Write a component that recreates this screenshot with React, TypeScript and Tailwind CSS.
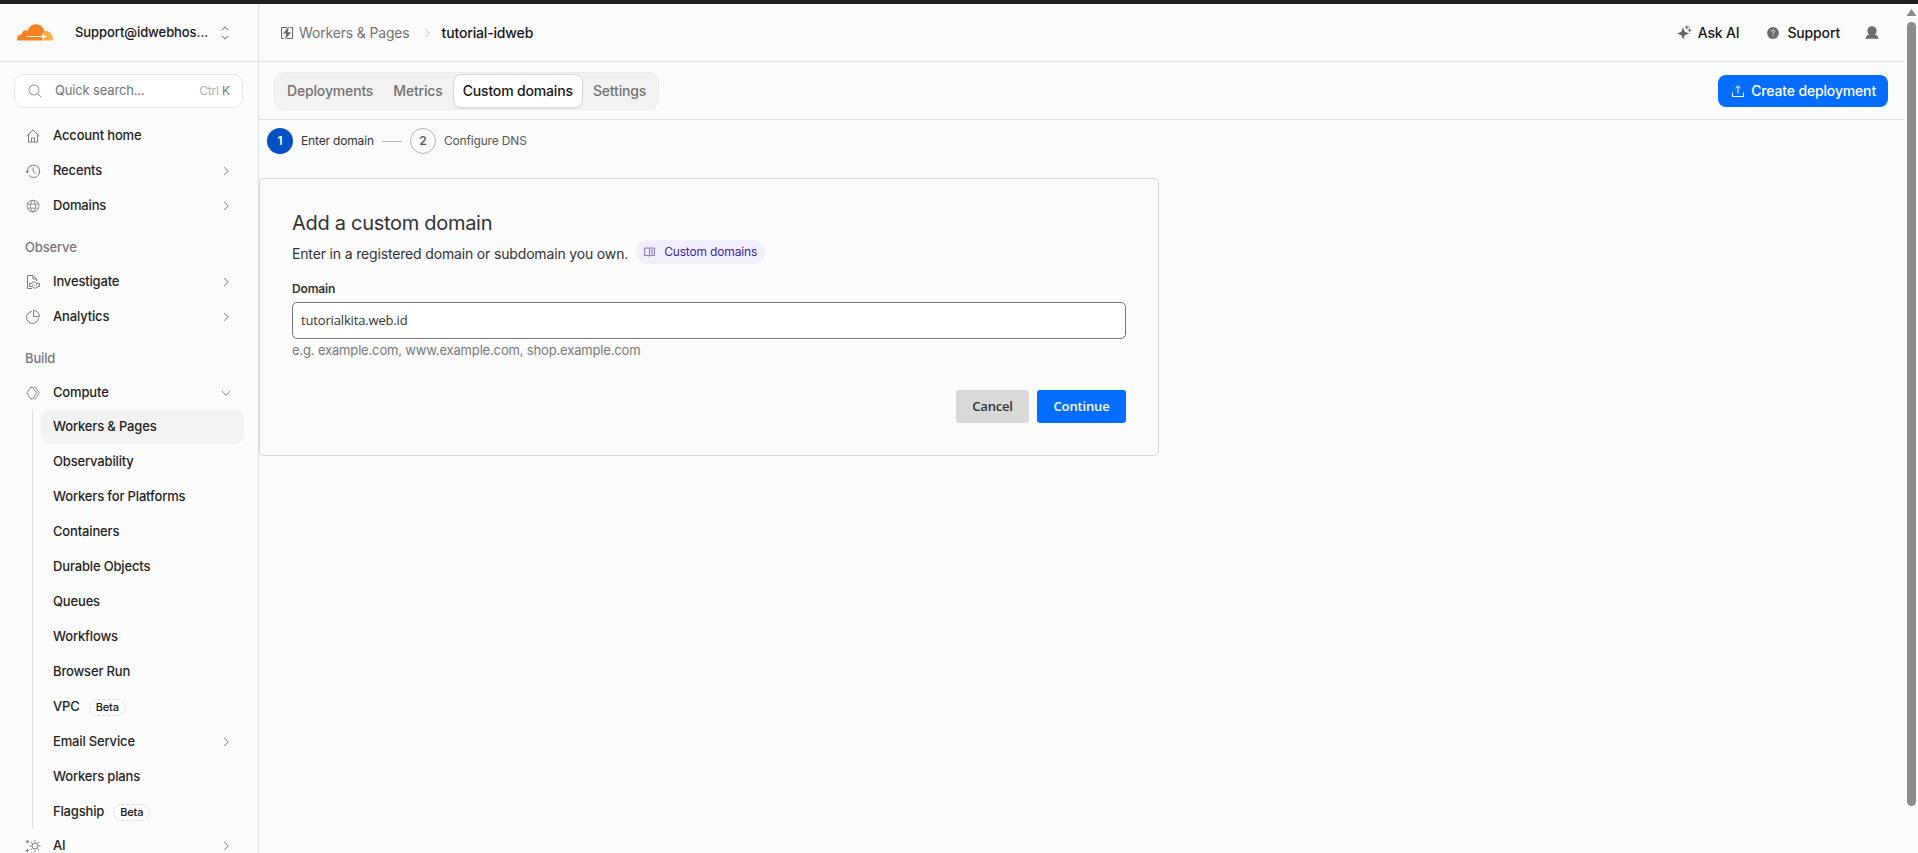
import React from 'react'
import {
  PiMagnifyingGlassLight,
  PiGlobeLight,
  PiCaretRight,
  PiCaretDown,
  PiCaretUpDown,
} from 'react-icons/pi'

type IconProps = { className?: string }

const CloudLogo: React.FC<IconProps> = ({ className }) => (
  <svg viewBox="0 0 36 17" className={className}>
    <path d="M24.500 16.600 26 12l1-4.700c.7-.3 1.400-.4 2.100-.4 3.900 0 6.900 3.900 6.900 8.800 0 .5-.1.900-.6.900z" fill="#fbad41" />
    <path d="M.6 16.600C.2 16.600 0 16.200 0 15.700c0-3 2-5.300 4.900-5.500-.2-2.200 1.500-4 3.500-3.900.9 0 1.700.3 2.300.8C11.900 3 15 .3 18.900.3c4.500 0 8.100 3.200 8.500 7.600l-.5 4.600-1.700 4.100z" fill="#f6821f" />
    <path d="M9.500 11.900h14l.5.6-.5.6h-14z" fill="#fff" />
    <path d="m26.200 8.200 1 3.200 3 1.100-3 1.100-1 3.200-1-3.200-3-1.100 3-1.100z" fill="#fff" />
  </svg>
)

const HomeIcon: React.FC<IconProps> = ({ className }) => (
  <svg viewBox="0 0 16 16" fill="none" stroke="currentColor" strokeWidth="1" className={className}>
    <path d="M1.500 8 8 2l6.500 6M3.500 6.500v7.500h9V6.500M6.500 14v-4h3v4" />
  </svg>
)

const HistoryIcon: React.FC<IconProps> = ({ className }) => (
  <svg viewBox="0 0 16 16" fill="none" stroke="currentColor" className={className}>
    <path d="M2.300 8.800A6.200 6.200 0 1 1 3.500 12" strokeWidth="1" />
    <path d="M.8 8.300h3L2.300 10z" fill="currentColor" strokeWidth=".6" />
    <path d="M8.200 4.400V8l2 2.600" strokeWidth="1" />
  </svg>
)

const InvestigateIcon: React.FC<IconProps> = ({ className }) => (
  <svg viewBox="0 0 16 16" fill="none" stroke="currentColor" strokeWidth="1" className={className}>
    <path d="M7 14.500H2.500v-13H8l3.500 3.500v2M8 1.500V5h3.500" />
    <path d="M4.500 9.500h2l1-1.500h3l1 1.500h3v3h-2l-1 1.500h-3l-1-1.500h-3zM7 11h1M9 11h1M11 11h1" />
  </svg>
)

const AnalyticsIcon: React.FC<IconProps> = ({ className }) => (
  <svg viewBox="0 0 16 16" fill="none" stroke="currentColor" strokeWidth="1" className={className}>
    <path d="M7 2.500A6 6 0 1 0 13.500 9M8.500 1.500v6h6a6 6 0 0 0-6-6z" />
  </svg>
)

const ComputeIcon: React.FC<IconProps> = ({ className }) => (
  <svg viewBox="0 0 16 16" fill="none" stroke="currentColor" strokeWidth=".9" className={className}>
    <path d="M6.500 2.500 5.700 2 1.800 8l3.900 6 .8-.5M6 2h1.500l4 6-4 6H6M9 2h1.300l3.900 6-3.900 6H9" />
  </svg>
)

const AiIcon: React.FC<IconProps> = ({ className }) => (
  <svg viewBox="0 0 16 16" fill="none" stroke="currentColor" strokeWidth="1" className={className}>
    <circle cx="10" cy="8" r="3" />
    <path d="M10 2v2M10 12v2M4.500 8h2M13.500 8h2M6 4l1.300 1.300M14 4l-1.300 1.300M6 12l1.300-1.300M14 12l-1.300-1.300" />
    <path d="M2.300 2v3.400M.6 3.700H4M2.300 11v3.400M.6 12.700H4" />
  </svg>
)

const WorkersIcon: React.FC<IconProps> = ({ className }) => (
  <svg viewBox="0 0 14 14" fill="none" stroke="currentColor" className={className}>
    <path d="M7 1.500H1.500v11h2.800M10 1.500h2.500v11H7" strokeWidth="1" />
    <path d="M9 .3 3 7.600h3.300L5 13.700l6-7.500H7.700z" fill="currentColor" stroke="none" />
  </svg>
)

const SparkleIcon: React.FC<IconProps> = ({ className }) => (
  <svg viewBox="0 0 16 16" fill="currentColor" className={className}>
    <path d="M6.500 2.500 8.300 7.200 13 9l-4.700 1.800-1.800 4.700-1.800-4.700L0 9l4.700-1.800z" />
    <path d="M10.500.5v4M8.500 2.500h4M13.500 3.800v3.400M11.800 5.500h3.400" stroke="currentColor" strokeWidth="1.100" />
  </svg>
)

const HelpIcon: React.FC<IconProps> = ({ className }) => (
  <svg viewBox="0 0 12 12" className={className}>
    <circle cx="6" cy="6" r="5.900" fill="currentColor" />
    <path d="M4.400 4.600c.1-2 3.300-1.900 3.200 0C7.600 5.700 6 5.600 6 7M6 8.200v1.100" fill="none" stroke="#fff" strokeWidth="1" />
  </svg>
)

const UserIcon: React.FC<IconProps> = ({ className }) => (
  <svg viewBox="0 0 14 13" fill="currentColor" className={className}>
    <path d="M7 .2c2.800 0 4.600 2 4.600 4.500 0 1.700-.7 3-1.900 3.900 2 .6 3.100 1.800 4 3.700.1.200 0 .5-.3.500H.6c-.3 0-.4-.3-.3-.5.9-1.900 2-3.100 4-3.700C3.100 7.700 2.400 6.400 2.400 4.700 2.400 2.200 4.200.2 7 .2z" />
  </svg>
)

const UploadIcon: React.FC<IconProps> = ({ className }) => (
  <svg viewBox="0 0 12 12" fill="none" stroke="currentColor" strokeWidth="1" className={className}>
    <path d="M.5 7.500v4h11v-4M6 8.500V1M3.500 3.300 6 .8l2.500 2.500" />
  </svg>
)

const BookIcon: React.FC<IconProps> = ({ className }) => (
  <svg viewBox="0 0 11 10" fill="none" stroke="currentColor" strokeWidth=".9" className={className}>
    <path d="M5.500 1.200v8M5.500 1H.6v7.500h3.800l1.100.8 1.100-.8h3.800V1zM7 3h2M7 4.700h2M7 6.400h2" />
  </svg>
)

interface NavItem {
  label: string
  icon?: React.FC<IconProps>
  caret?: 'right' | 'down'
  beta?: boolean
  active?: boolean
}

const mainItems: NavItem[] = [
  { label: 'Account home', icon: HomeIcon },
  { label: 'Recents', icon: HistoryIcon, caret: 'right' },
  { label: 'Domains', icon: PiGlobeLight, caret: 'right' },
]

const observeItems: NavItem[] = [
  { label: 'Investigate', icon: InvestigateIcon, caret: 'right' },
  { label: 'Analytics', icon: AnalyticsIcon, caret: 'right' },
]

const computeItems: NavItem[] = [
  { label: 'Workers & Pages', active: true },
  { label: 'Observability' },
  { label: 'Workers for Platforms' },
  { label: 'Containers' },
  { label: 'Durable Objects' },
  { label: 'Queues' },
  { label: 'Workflows' },
  { label: 'Browser Run' },
  { label: 'VPC', beta: true },
  { label: 'Email Service', caret: 'right' },
  { label: 'Workers plans' },
  { label: 'Flagship', beta: true },
]

const tabs = ['Deployments', 'Metrics', 'Custom domains', 'Settings']

const NavRow: React.FC<{ item: NavItem }> = ({ item }) => {
  const Icon = item.icon
  return (
    <a
      className={`flex h-[34px] shrink-0 items-center rounded-lg pr-3 text-[13px] font-medium text-[#1f1f1f] ${
        Icon ? 'pl-[10px]' : 'pl-3'
      } ${item.active ? 'bg-[#f2f2f2]' : ''}`}
    >
      {Icon && <Icon className="mr-3 h-4 w-4 text-[#7d7d7d]" />}
      <span>{item.label}</span>
      {item.beta && (
        <span className="ml-[9px] mt-px flex h-[17px] items-center rounded-full border border-dashed border-[#dcdcdc] px-1.5 text-[11px] text-[#171717]">
          Beta
        </span>
      )}
      {item.caret === 'right' && <PiCaretRight className="ml-auto h-3 w-3 text-[#7d7d7d]" />}
      {item.caret === 'down' && <PiCaretDown className="ml-auto h-3 w-3 text-[#7d7d7d]" />}
    </a>
  )
}

const NavHeading: React.FC<{ children: React.ReactNode }> = ({ children }) => (
  <div className="mb-1 mt-3 flex h-[26px] shrink-0 items-center pl-[10px] text-[13px] font-medium text-[#777]">{children}</div>
)

const Sidebar = () => (
  <aside className="flex w-[259px] shrink-0 flex-col overflow-hidden border-r border-[#dedede]">
    <div className="flex h-[58px] shrink-0 items-center border-b border-[#dedede] pl-[17px] pr-[25px]">
      <CloudLogo className="h-[17px] w-9" />
      <span className="ml-[22px] text-[13px] font-medium tracking-[-0.08px] text-[#171717]">Support@idwebhos...</span>
      <PiCaretUpDown className="ml-auto h-4 w-4 text-[#777]" />
    </div>
    <div className="ml-[14px] mt-3 flex h-[34px] w-[229px] shrink-0 items-center rounded-[10px] border border-[#e5e5e5] bg-white px-3 text-[13px]">
      <PiMagnifyingGlassLight className="h-4 w-4 text-[#858585]" />
      <span className="ml-3 text-[#737373]">Quick search...</span>
      <span className="ml-auto text-[12px] text-[#b0b0b0]">
        Ctrl <span className="text-[#737373]">K</span>
      </span>
    </div>
    <nav className="mt-[11px] flex flex-col pl-[15px] pr-[14px]">
      <div className="flex flex-col gap-px">
        {mainItems.map((item) => (
          <NavRow key={item.label} item={item} />
        ))}
      </div>
      <NavHeading>Observe</NavHeading>
      <div className="flex flex-col gap-px">
        {observeItems.map((item) => (
          <NavRow key={item.label} item={item} />
        ))}
      </div>
      <NavHeading>Build</NavHeading>
      <NavRow item={{ label: 'Compute', icon: ComputeIcon, caret: 'down' }} />
      <div className="ml-[17px] flex flex-col gap-px border-l border-[#dcdcdc] pl-2">
        {computeItems.map((item) => (
          <NavRow key={item.label} item={item} />
        ))}
      </div>
      <NavRow item={{ label: 'AI', icon: AiIcon, caret: 'right' }} />
    </nav>
  </aside>
)

const Header = () => (
  <header className="flex h-[58px] shrink-0 items-center border-b border-[#dedede] pl-[21px] pr-[25px] text-sm">
    <WorkersIcon className="h-[14px] w-[14px] text-[#666]" />
    <span className="ml-[5px] text-[#737373]">Workers &amp; Pages</span>
    <PiCaretRight className="ml-[11px] mr-[9px] h-3 w-3 text-[#c4c4c4]" />
    <span className="font-medium text-[#171717]">tutorial-idweb</span>
    <div className="ml-auto flex items-center font-medium text-[#171717]">
      <SparkleIcon className="h-[15px] w-[15px] text-[#666]" />
      <span className="ml-1.5">Ask AI</span>
      <HelpIcon className="ml-7 h-3 w-3 text-[#6b6b6b]" />
      <span className="ml-2">Support</span>
      <UserIcon className="ml-[25px] h-[13px] w-[14px] text-[#6b6b6b]" />
    </div>
  </header>
)

const TabBar = () => (
  <div className="flex h-[58px] shrink-0 items-center justify-between border-b border-[#dedede] pl-[15px] pr-4">
    <div className="flex h-[38px] items-center rounded-[10px] border border-[#ececec] bg-[#f2f2f2] px-0.5 text-sm font-medium text-[#737373]">
      {tabs.map((tab) => (
        <button
          key={tab}
          className={`h-[34px] font-medium ${
            tab === 'Custom domains'
              ? 'rounded-lg border border-[#d8d8d8] bg-white px-[9px] text-[#171717] shadow-xs'
              : 'px-[10px]'
          }`}
        >
          {tab}
        </button>
      ))}
    </div>
    <button className="flex h-8 items-center rounded-lg bg-[#056dff] px-3 text-sm font-medium text-white">
      <UploadIcon className="ml-0.5 mr-[7px] h-3 w-3" />
      Create deployment
    </button>
  </div>
)

const Stepper = () => (
  <div className="flex h-[26px] items-center pl-2 text-xs">
    <span className="flex h-[26px] w-[26px] items-center justify-center rounded-full bg-[#0051c3] font-semibold text-white">1</span>
    <span className="ml-2 text-[#333]">Enter domain</span>
    <span className="mx-2 h-px w-5 bg-[#b6b6b6]" />
    <span className="flex h-[26px] w-[26px] items-center justify-center rounded-full border border-[#b6b6b6] font-semibold text-[#595959]">
      2
    </span>
    <span className="ml-2 text-[#595959]">Configure DNS</span>
  </div>
)

const DomainForm = () => (
  <section className="mt-6 h-[278px] w-[900px] rounded-[5px] border border-[#d9d9d9] px-8 pt-[29px] text-[#333]">
    <h2 className="h-[31px] text-xl leading-[30px] tracking-[-0.29px]">Add a custom domain</h2>
    <div className="flex h-6 items-start text-sm">
      <p className="leading-[30px]">Enter in a registered domain or subdomain you own.</p>
      <a className="ml-2 mt-px flex h-6 items-center rounded-full bg-[#f2effd] px-2 text-xs text-[#3d1fa5]">
        <BookIcon className="mr-[9px] h-[10px] w-[11px] text-[#7a63d4]" />
        Custom domains
      </a>
    </div>
    <label className="mt-[18px] block text-xs font-semibold leading-4">Domain</label>
    <input
      defaultValue="tutorialkita.web.id"
      className="mt-[5px] block h-[37px] w-full rounded-[5px] border border-[#797979] bg-white px-2 pb-0.5 font-['Open_Sans',sans-serif] text-[13px] text-[#333] outline-none"
    />
    <p className="mt-px text-[13px] leading-5 text-[#797979]">e.g. example.com, www.example.com, shop.example.com</p>
    <div className="mt-[30px] flex justify-end gap-2 font-['Open_Sans',sans-serif] text-[13px] font-semibold">
      <button className="h-[33px] w-[73px] rounded-[3px] bg-[#d9d9d9] text-[#333]">Cancel</button>
      <button className="h-[33px] w-[89px] rounded-[3px] bg-[#056dff] text-white">Continue</button>
    </div>
  </section>
)

// Page scrollbar with an arrow on top and a long thumb
const Scrollbar = () => (
  <div className="flex w-[14px] shrink-0 flex-col items-center bg-[#fcfcfc] pt-[5px]">
    <svg viewBox="0 0 9 7" className="h-[7px] w-[9px]">
      <path d="M4.500 0 9 6.300V7H0v-.7z" fill="#8b8b8b" />
    </svg>
    <div className="mt-1.5 h-[784px] w-[9px] rounded-full bg-[#8b8b8b]" />
  </div>
)

export default function App() {
  return (
    <div className="flex h-[853px] w-[1918px] flex-col overflow-hidden border-t-4 border-[#1f1f1f] bg-[#fbfbfb] font-['Inter',sans-serif] tracking-[-0.16px]">
      <div className="flex min-h-0 flex-1">
        <Sidebar />
        <div className="flex min-w-0 flex-1 flex-col">
          <Header />
          <TabBar />
          <main className="pt-2">
            <Stepper />
            <DomainForm />
          </main>
        </div>
        <Scrollbar />
      </div>
    </div>
  )
}
